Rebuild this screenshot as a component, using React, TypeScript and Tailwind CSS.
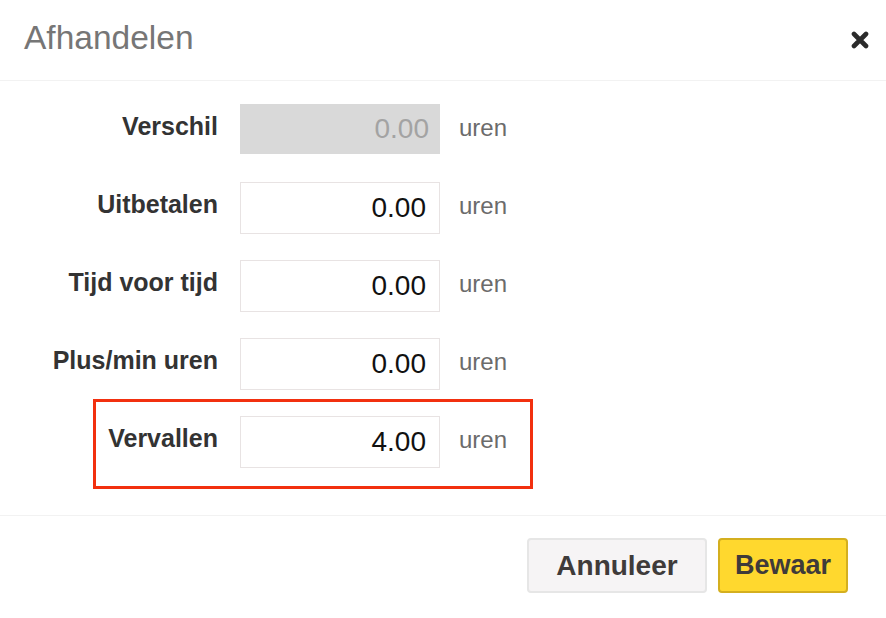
import React from "react";

const rows = [
  { label: "Verschil", value: "0.00", disabled: true },
  { label: "Uitbetalen", value: "0.00" },
  { label: "Tijd voor tijd", value: "0.00" },
  { label: "Plus/min uren", value: "0.00" },
  { label: "Vervallen", value: "4.00", highlight: true },
];

export default function App() {
  return (
    <div
      className="w-[886px] h-[618px] bg-white flex flex-col"
      style={{ fontFamily: '"Liberation Sans", Arial, sans-serif' }}
    >
      <div className="h-[81px] border-b border-[#f2f2f2] flex items-start justify-between pl-[24px] pr-[17px] pt-[18px] shrink-0">
        <div className="text-[33.5px] leading-[40px] text-[#767676]">Afhandelen</div>
        <svg width="18" height="18" viewBox="0 0 18 18" className="mt-[13px]">
          <path d="M3 3 L15 15 M15 3 L3 15" stroke="#2b2b2b" strokeWidth="4.6" strokeLinecap="round" />
        </svg>
      </div>
      <div className="flex flex-col gap-[26px] pt-[23px] pb-[47px]">
        {rows.map((r) => (
          <div key={r.label} className="relative flex items-start h-[52px]">
            {r.highlight && (
              <div className="absolute left-[93px] top-[-17px] w-[440px] h-[90px] border-[3px] border-[#f2300f]" />
            )}
            <div className="w-[218px] text-right pt-[10px] text-[25px] leading-[25px] font-bold text-[#333333] whitespace-nowrap">
              {r.label}
            </div>
            <div
              className={
                r.disabled
                  ? "ml-[22px] w-[200px] h-[50px] bg-[#d9d9d9] flex items-center justify-end pr-[11px] text-[28px] text-[#a3a3a3]"
                  : "ml-[22px] w-[200px] h-[52px] border border-[#e8e3e3] bg-white flex items-center justify-end pr-[13px] text-[28px] text-[#111111]"
              }
            >
              {r.value}
            </div>
            <div className="ml-[19px] pt-[12px] text-[24px] leading-[24px] text-[#6b6b6b]">uren</div>
          </div>
        ))}
      </div>
      <div className="border-t border-[#f2f2f2] flex justify-end gap-[11px] pt-[22px] pr-[38px]">
        <div className="w-[180px] h-[55px] rounded-[4px] border-2 border-[#e6e6e6] bg-[#f6f4f5] flex items-center justify-center text-[28px] font-bold text-[#3f3b3a]">
          Annuleer
        </div>
        <div className="w-[130px] h-[55px] rounded-[4px] border-2 border-[#d4af1f] bg-[#ffd82e] flex items-center justify-center text-[27px] font-bold text-[#3f3b3a]">
          Bewaar
        </div>
      </div>
    </div>
  );
}
